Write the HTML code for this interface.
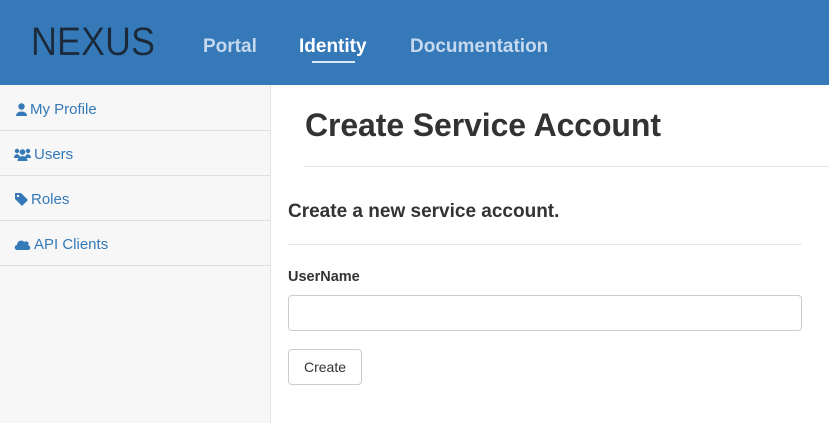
<!DOCTYPE html>
<html><head><style>
*{box-sizing:border-box;margin:0;padding:0}
body{width:829px;height:423px;overflow:hidden;font-family:"Liberation Sans",sans-serif;background:#fff;position:relative;color:#333}
.hdr{position:absolute;left:0;top:0;width:829px;height:85px;background:#3579b8}
.logo{position:absolute;left:31px;top:20px;font-size:40px;color:#1b2838;font-weight:normal;letter-spacing:0px;transform:scaleX(0.9);transform-origin:left;-webkit-text-stroke:0.3px #3579b8}
.nav{position:absolute;top:36px;font-size:19px;font-weight:bold;color:#c6d9ee}
.side{position:absolute;left:0;top:85px;width:271px;height:338px;background:#f7f7f7;border-right:1px solid #e3e3e3;padding-top:1px}
.item{height:45px;border-bottom:1px solid #e0e0e0;color:#3579b8;font-size:15px;line-height:45px;padding-left:14px;display:flex;align-items:center;padding-top:2px}
.item svg{margin-right:3px}
</style></head><body>
<div class="hdr">
<div class="logo">NEXUS</div>
<div class="nav" style="left:203px">Portal</div>
<div class="nav" style="left:299px;color:#fff">Identity</div>
<div style="position:absolute;left:312px;top:61px;width:43px;height:2px;background:#dbe7f3"></div>
<div class="nav" style="left:410px">Documentation</div>
</div>
<div class="side">
<div class="item" style="padding-left:16px"><svg width="11" height="13" viewBox="0 0 11 13"><circle cx="5.5" cy="3.5" r="3.2" fill="#3579b8"/><path d="M0 13 C0 7 11 7 11 13Z" fill="#3579b8"/></svg>My Profile</div>
<div class="item"><svg width="17" height="13" viewBox="0 0 17 13"><circle cx="3" cy="3" r="2.2" fill="#3579b8"/><circle cx="14" cy="3" r="2.2" fill="#3579b8"/><circle cx="8.5" cy="4" r="2.8" fill="#3579b8"/><path d="M0 10C0 5 6 5 6 10ZM11 10C11 5 17 5 17 10ZM3.5 13C3.5 6.5 13.5 6.5 13.5 13Z" fill="#3579b8"/></svg>Users</div>
<div class="item" style="padding-left:15px"><svg width="13" height="13" viewBox="0 0 13 13"><path d="M0 0H6L13 7 7 13 0 6Z" fill="#3579b8"/><circle cx="3" cy="3" r="1.2" fill="#f7f7f7"/></svg>Roles</div>
<div class="item"><svg width="17" height="12" viewBox="0 0 17 12"><path d="M3 12C0 12 0 7 3 7 3 3 8 1 10 4 13 2 16 5 14 7 17 8 17 12 14 12Z" fill="#3579b8"/></svg>API Clients</div>
</div>
<div style="position:absolute;left:305px;top:107px;font-size:32px;font-weight:bold;color:#333;letter-spacing:-0.1px">Create Service Account</div>
<div style="position:absolute;left:304px;top:166px;width:525px;border-top:1px solid #e6e6e6"></div>
<div style="position:absolute;left:288px;top:201px;font-size:19px;font-weight:bold">Create a new service account.</div>
<div style="position:absolute;left:288px;top:244px;width:514px;border-top:1px solid #e6e6e6"></div>
<div style="position:absolute;left:288px;top:269px;font-size:14.5px;font-weight:bold">UserName</div>
<div style="position:absolute;left:288px;top:295px;width:514px;height:36px;border:1px solid #ccc;border-radius:4px"></div>
<div style="position:absolute;left:288px;top:349px;width:74px;height:36px;border:1px solid #ccc;border-radius:4px;font-size:14px;text-align:center;line-height:34px">Create</div>
</body></html>
